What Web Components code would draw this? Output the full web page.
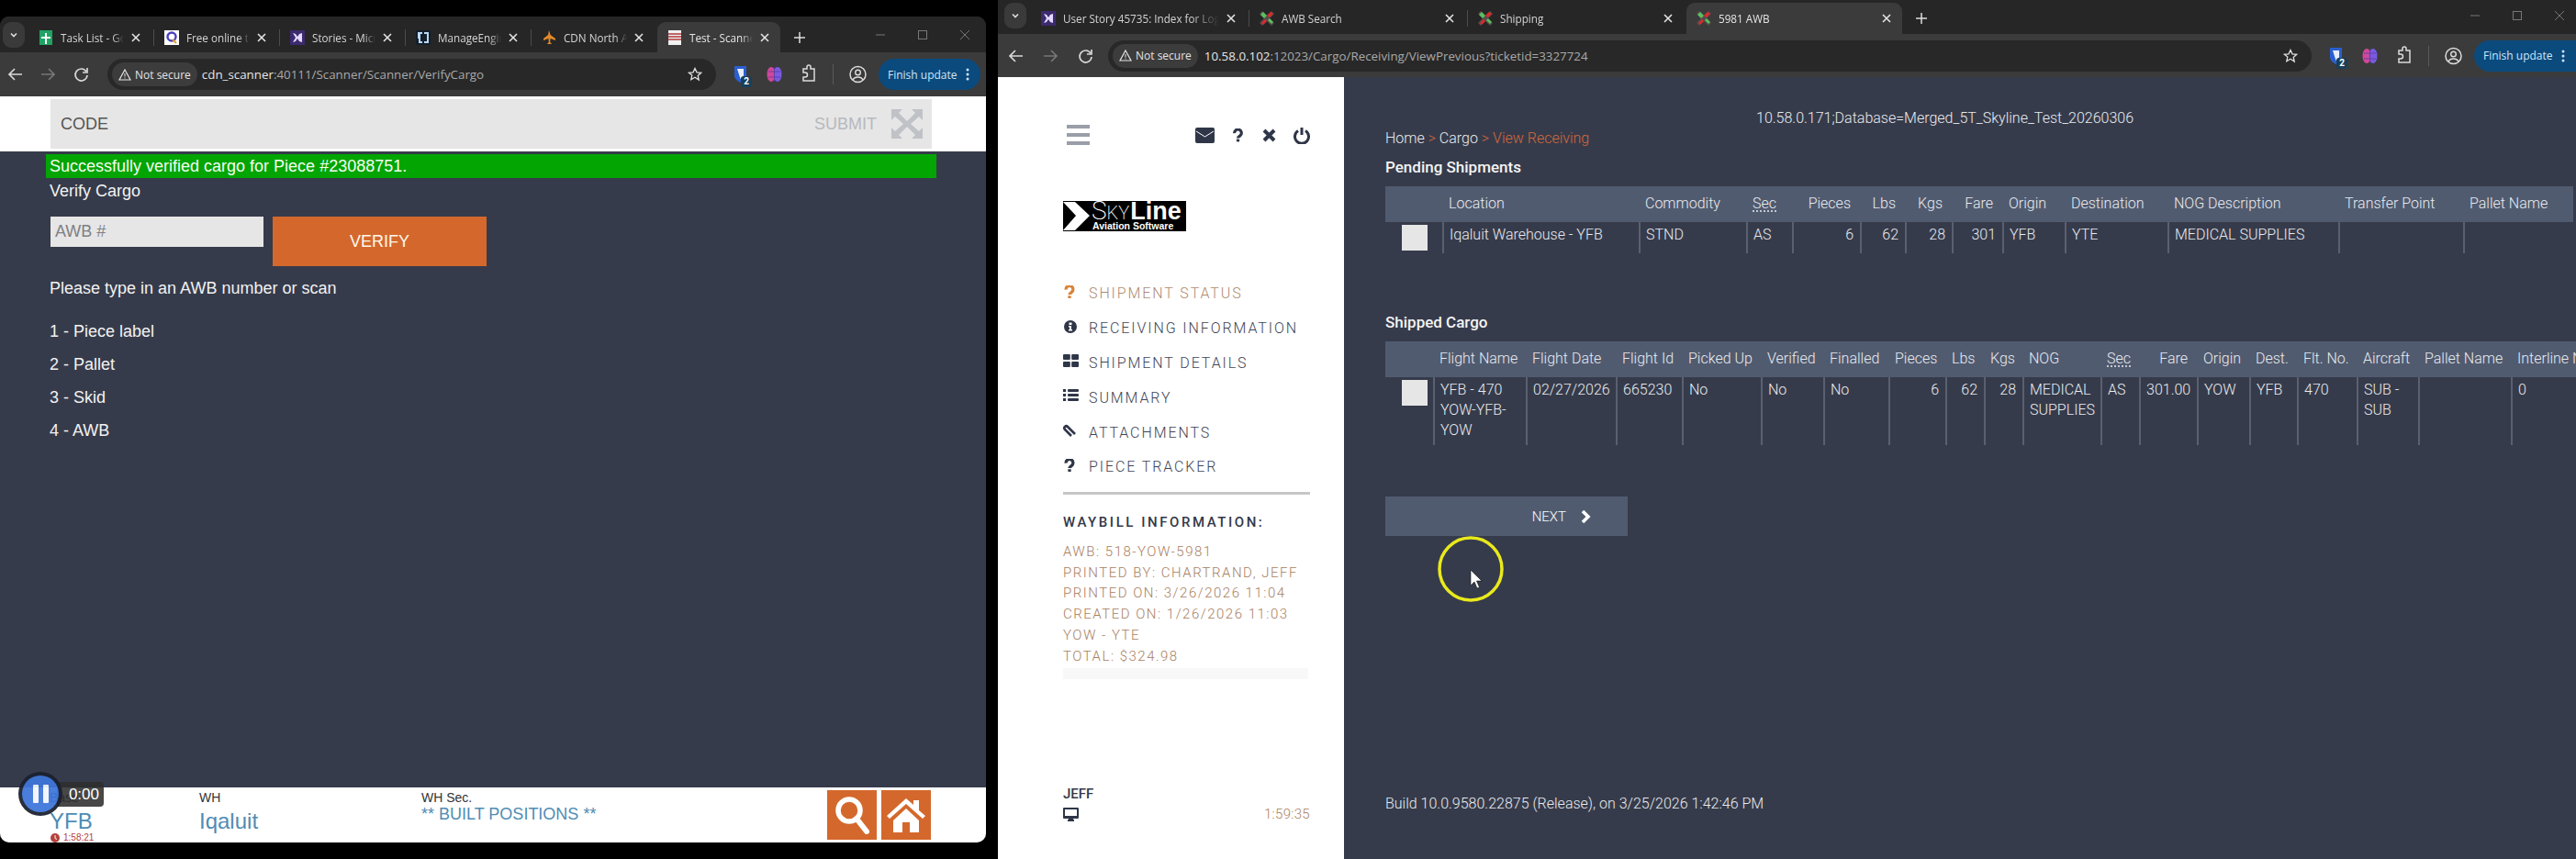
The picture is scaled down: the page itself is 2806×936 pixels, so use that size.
<!DOCTYPE html>
<html>
<head>
<meta charset="utf-8">
<title>Cargo</title>
<style>
  html, body { margin: 0; background: #000; }
  body { width: 2806px; height: 936px; overflow: hidden; }
</style>
</head>
<body>
<desk-top>
  <browser-window class="left" url-host="cdn_scanner" url-rest=":40111/Scanner/Scanner/VerifyCargo">
    <browser-tab slot="tabs" icon="sheets" label="Task List - Google Sheets"></browser-tab>
    <browser-tab slot="tabs" icon="free" label="Free online tools"></browser-tab>
    <browser-tab slot="tabs" icon="vs" label="Stories - Microsoft"></browser-tab>
    <browser-tab slot="tabs" icon="me" label="ManageEngine"></browser-tab>
    <browser-tab slot="tabs" icon="plane" label="CDN North Air" nosep></browser-tab>
    <browser-tab slot="tabs" icon="note" label="Test - Scanner" active nosep></browser-tab>
    <scanner-page></scanner-page>
  </browser-window>
  <browser-window class="right" url-host="10.58.0.102" url-rest=":12023/Cargo/Receiving/ViewPrevious?ticketid=3327724">
    <browser-tab slot="tabs" icon="vs" label="User Story 45735: Index for Logging"></browser-tab>
    <browser-tab slot="tabs" icon="sky" label="AWB Search"></browser-tab>
    <browser-tab slot="tabs" icon="sky" label="Shipping" nosep></browser-tab>
    <browser-tab slot="tabs" icon="sky" label="5981 AWB" active nosep></browser-tab>
    <skyline-page></skyline-page>
  </browser-window>
</desk-top>

<script>
const FAVICONS = {
  sheets: '<path d="M1 0h14v16H1z" fill="#1fa463"/><path d="M7 3h2v4h4v2H9v6H7V9H3V7h4z" fill="#fff"/>',
  free: '<rect width="16" height="16" fill="#fff"/><circle cx="8" cy="7" r="4.500" fill="none" stroke="#4a3fc0" stroke-width="2.400"/><path d="M9 10l4 4" stroke="#e0a020" stroke-width="2"/>',
  vs: '<rect width="16" height="16" fill="#3c2a6e"/><path d="M3 3l3 5-3 5 3-1 2-3 2 3 3 1V3l-3 1-2 3-2-3z" fill="#e3d8ff"/>',
  me: '<rect width="16" height="16" fill="#14202c"/><path d="M2 2h5v2H5v8h2v2H3V9H2zM9 2h5v12H9v-2h3V4H9z" fill="#bcd8f4"/>',
  plane: '<path d="M8 0l1.600 5L15 9v2l-5.400-2-.4 4 2 2H5.800l2-2-.4-4L2 11V9l5-4z" fill="#e08a2a"/>',
  note: '<rect x="1" width="14" height="16" fill="#f1f1f1"/><path d="M1 4h14M1 7h14M1 10h14" stroke="#b03a3a" stroke-width="1.600"/>',
  sky: '<path d="M0 3l5 5-5 5 3 3 5-5 5 5 3-3-5-5 5-5-3-3-5 5-5-5z" fill="#5a4a4a"/><path d="M8 5l4-4 3 2-4 4zM2 13l4-4 2 2-4 4z" fill="#d92b2b"/><path d="M1 4l3-3 4 4-3 3zM9 10l2-2 4 4-2 2z" fill="#58c060"/>'
};

// desktop behind the two browser windows
class DeskTop extends HTMLElement {
  constructor() {
    super();
    this.attachShadow({ mode: 'open' }).innerHTML = `
      <style>
        :host { display: grid; grid-template-columns: 1074px 1719px; column-gap: 13px; height: 936px; background: #000; }
        ::slotted(.left) { margin: 18px 0; height: 900px; border-radius: 10px; --strip-top: 6px; --strip-h: 39px; --bar-h: 48px; --tabs-left: 31px; --chev-left: 3px; --tab-w: 137px; --nav-pad: 0px; --nav-gap: 0px; --omni-left: 9px; --url-left: 5px; --pill-right: 6px; --ctl-shift: 0px; }
        ::slotted(.right) { height: 936px; --strip-top: 3px; --strip-h: 37px; --bar-h: 47px; --tabs-left: 36px; --chev-left: 7px; --tab-w: 238px; --nav-pad: 3px; --nav-gap: 2px; --omni-left: 5px; --url-left: 7px; --pill-right: 0px; --ctl-shift: -5px; }
      </style>
      <slot></slot>`;
  }
}

class BrowserTab extends HTMLElement {
  constructor() {
    super();
    const active = this.hasAttribute('active');
    const sep = this.hasAttribute('nosep') ? '' : 'sep';
    this.attachShadow({ mode: 'open' }).innerHTML = `
      <style>
        :host { display: block; width: var(--tab-w); height: 34px; flex: none; }
        .tab { position: relative; display: flex; align-items: center; box-sizing: border-box; height: 34px; padding-left: 11px; color: #d4d4d4; border-radius: 9px 9px 0 0; margin-right: 3px; }
        .tab.on { background: #3b3b3b; color: #e6e6e6; }
        .tab.sep::after { content: ""; position: absolute; right: -3px; top: 8px; width: 1px; height: 18px; background: #4c4c4c; }
        svg.fav { width: 16px; height: 16px; flex: none; margin-right: 8px; }
        .label { flex: 1; min-width: 0; white-space: nowrap; overflow: hidden; font: 11.7px "Open Sans", sans-serif; -webkit-mask-image: linear-gradient(to right, #000 82%, transparent); mask-image: linear-gradient(to right, #000 82%, transparent); }
        .x { flex: none; width: 10px; height: 10px; margin: 0 12px 0 8px; }
      </style>
      <div class="tab ${active ? 'on' : ''} ${sep}">
        <svg class="fav" viewBox="0 0 16 16">${FAVICONS[this.getAttribute('icon')]}</svg>
        <span class="label">${this.getAttribute('label')}</span>
        <svg class="x" viewBox="0 0 10 10"><path d="M1 1l8 8M9 1l-8 8" stroke="#e4e4e4" stroke-width="1.600"/></svg>
      </div>`;
  }
}

class BrowserWindow extends HTMLElement {
  constructor() {
    super();
    this.attachShadow({ mode: 'open' }).innerHTML = `
      <style>
        :host { display: flex; flex-direction: column; position: relative; overflow: hidden; background: #363b4b; }
        .strip { display: flex; align-items: flex-start; box-sizing: border-box; height: var(--strip-h); padding-top: var(--strip-top); background: #262626; flex: none; }
        .chev { flex: none; width: 24px; height: 28px; margin-left: var(--chev-left); margin-right: calc(var(--tabs-left) - var(--chev-left) - 24px); background: #3a3a3a; border-radius: 9px; display: flex; align-items: center; justify-content: center; }
        .tabs { display: flex; }
        .plus { flex: none; width: 12px; height: 12px; margin: 11px 0 0 12px; }
        .ctl { margin-left: auto; margin-right: var(--ctl-shift); display: flex; }
        .ctl svg { width: 46px; height: 34px; }
        .bar { display: flex; align-items: center; height: var(--bar-h); flex: none; box-sizing: border-box; padding: 0 var(--pill-right) 0 var(--nav-pad); background: #3b3b3b; }
        .nav { display: flex; gap: var(--nav-gap); flex: none; }
        .nav svg { height: 18px; display: block; }
        .omni { flex: 1; min-width: 0; height: 34px; margin-left: var(--omni-left); border-radius: 17px; background: #282828; display: flex; align-items: center; padding: 0 15px 0 5px; }
        .chip { display: flex; align-items: center; gap: 4px; height: 26px; padding: 0 7px 0 7px; border-radius: 13px; background: #3c3c3c; color: #e4e4e4; font: 12px "Open Sans", sans-serif; white-space: nowrap; }
        .url { margin-left: var(--url-left); flex: 1; font: 13.35px "Open Sans", sans-serif; color: #e6e6e6; white-space: nowrap; }
        .url span { color: #a9a9a9; }
        .tools { display: flex; align-items: center; flex: none; margin-left: 8px; }
        .ext { position: relative; display: block; width: 37px; height: 22px; }
        .ext svg { display: block; width: 37px; height: 22px; }
        .badge { position: absolute; right: 6px; bottom: -3px; width: 12px; height: 12px; background: #17405c; color: #fff; font: bold 10px/12px Roboto, sans-serif; text-align: center; border-radius: 3px; }
        .sep { width: 1px; height: 22px; background: #5a5a5a; margin: 0 8px 0 8px; }
        .pill { display: flex; align-items: center; width: 111px; height: 34px; box-sizing: border-box; margin-left: 4px; padding-left: 10px; border-radius: 17px 0 0 17px; background: #0b4a7d; color: #cfe6fa; font: 12px "Open Sans", sans-serif; white-space: nowrap; }
        :host(.left) .pill { border-radius: 17px; }
        .pill svg { width: 4px; height: 14px; margin-left: 9px; }
        .page { flex: 1; min-height: 0; display: flex; flex-direction: column; }
      </style>
      <div class="strip">
        <span class="chev"><svg width="10" height="10" viewBox="0 0 10 10"><path d="M2 3.500l3 3 3-3" fill="none" stroke="#ddd" stroke-width="1.600"/></svg></span>
        <div class="tabs"><slot name="tabs"></slot></div>
        <svg class="plus" viewBox="0 0 12 12"><path d="M6 0v12M0 6h12" stroke="#ddd" stroke-width="1.500"/></svg>
        <div class="ctl">
          <svg viewBox="0 0 46 34"><path d="M18 14h10" stroke="#777" stroke-width="1"/></svg>
          <svg viewBox="0 0 46 34"><rect x="18.500" y="9.500" width="9" height="9" fill="none" stroke="#777"/></svg>
          <svg viewBox="0 0 46 34"><path d="M18 9l10 10M28 9l-10 10" stroke="#777"/></svg>
        </div>
      </div>
      <div class="bar">
        <div class="nav">
          <svg width="34" viewBox="0 0 34 18"><path d="M24 9H10M16 3L10 9l6 6" fill="none" stroke="#d8d8d8" stroke-width="1.700"/></svg>
          <svg width="36" viewBox="0 0 36 18"><path d="M11 9h14M19 3l6 6-6 6" fill="none" stroke="#777" stroke-width="1.700"/></svg>
          <svg width="38" viewBox="0 0 38 18"><path d="M24 6a6.500 6.500 0 1 0 1 4" fill="none" stroke="#d8d8d8" stroke-width="1.700"/><path d="M25 2v5h-5" fill="none" stroke="#d8d8d8" stroke-width="1.700"/></svg>
        </div>
        <div class="omni">
          <span class="chip"><svg width="14" height="13" viewBox="0 0 14 13"><path d="M7 1l6 11H1z" fill="none" stroke="#e4e4e4" stroke-width="1.200"/><path d="M7 5v3.500M7 9.500v1" stroke="#e4e4e4"/></svg>Not secure</span>
          <span class="url">${this.getAttribute('url-host')}<span>${this.getAttribute('url-rest')}</span></span>
          <svg width="16" height="16" viewBox="0 0 16 16"><path d="M8 1.500l2 4.300 4.700.5-3.500 3.100 1 4.600L8 11.300l-4.200 2.400 1-4.600L1.300 6.300 6 5.800z" fill="none" stroke="#e0e0e0" stroke-width="1.300"/></svg>
        </div>
        <div class="tools">
          <span class="ext"><svg viewBox="0 0 37 22"><path d="M12 2h13v10c0 4-3 6-6.500 8C15 18 12 16 12 12z" fill="#2a5fd0"/><path d="M15 5h7v7c0 2-2 3-3.500 4z" fill="#e8eefc"/></svg><span class="badge">2</span></span>
          <span class="ext"><svg viewBox="0 0 37 22"><ellipse cx="15" cy="11" rx="4.500" ry="8" fill="#d0489a"/><ellipse cx="22" cy="11" rx="4.500" ry="8" fill="#7a5ae0"/><path d="M18.500 3v16M12 8h13M12 14h13" stroke="#5e3a9c" stroke-width=".8"/></svg></span>
          <span class="ext"><svg viewBox="0 0 37 22"><path d="M13 5h4V3a2 2 0 0 1 4 0v2h4v13H13v-4h2a2 2 0 0 0 0-5h-2z" fill="none" stroke="#dcdcdc" stroke-width="1.500"/></svg></span>
          <span class="sep"></span>
          <span class="ext"><svg viewBox="0 0 37 22"><circle cx="18.500" cy="11" r="8.500" fill="none" stroke="#dcdcdc" stroke-width="1.500"/><circle cx="18.500" cy="9" r="2.800" fill="none" stroke="#dcdcdc" stroke-width="1.400"/><path d="M13 17c2-4 9-4 11 0" fill="none" stroke="#dcdcdc" stroke-width="1.400"/></svg></span>
          <span class="pill">Finish update<svg viewBox="0 0 4 14"><circle cx="2" cy="2" r="1.500" fill="#cfe6fa"/><circle cx="2" cy="7" r="1.500" fill="#cfe6fa"/><circle cx="2" cy="12" r="1.500" fill="#cfe6fa"/></svg></span>
        </div>
      </div>
      <div class="page"><slot></slot></div>`;
  }
}

class ScannerPage extends HTMLElement {
  constructor() {
    super();
    this.attachShadow({ mode: 'open' }).innerHTML = `
      <style>
        :host { display: flex; flex-direction: column; flex: 1; position: relative; min-height: 0; background: #363b4b; color: #f2f2f2; font: 18px/20px "Liberation Sans", Arial, sans-serif; }
        .top { background: #fff; padding: 3px 59px 3px 55px; flex: none; }
        .code { display: flex; align-items: center; height: 54px; box-sizing: border-box; padding: 0 10px 0 11px; background: #e6e6e6; color: #555; }
        .submit { margin-left: auto; color: #b6b9be; margin-right: 16px; }
        .ok { height: 26px; line-height: 26px; margin: 3px 54px 0 50px; padding-left: 4px; background: #03a503; color: #f4fff4; }
        .title { margin: 4px 0 0 54px; }
        .form { display: flex; align-items: flex-start; gap: 10px; margin: 18px 0 0 55px; }
        .awb { width: 232px; height: 33px; box-sizing: border-box; padding: 0 5px; line-height: 33px; background: #e6e6e6; color: #7f8084; }
        .verify { width: 233px; height: 54px; line-height: 54px; text-align: center; background: #d4682c; color: #fff8ee; }
        .help { margin: 14px 0 0 54px; }
        ol { list-style: none; margin: 27px 0 0 54px; padding: 0; }
        li { margin-bottom: 16px; }
        .foot { display: flex; margin-top: auto; height: 60px; box-sizing: border-box; padding: 3px 60px 0 54px; background: #fff; flex: none; color: #4f8cb4; overflow: hidden; }
        .col { flex: none; }
        .base { width: 163px; }
        .wh { width: 242px; }
        .label { font-size: 14px; line-height: 16px; color: #333; }
        .big { font-size: 24px; line-height: 28px; margin-top: 4px; }
        .pos { font-size: 18px; line-height: 20px; }
        .clock { display: flex; align-items: center; gap: 4px; margin: -1px 0 0 1px; font-size: 10px; line-height: 10px; color: #b5423c; }
        .btns { margin-left: auto; display: flex; gap: 5px; }
        .btn { width: 54px; height: 54px; background: #d4682c; display: flex; align-items: center; justify-content: center; }
        .rec { position: absolute; left: 20px; bottom: 29px; width: 48px; height: 48px; border-radius: 50%; background: #1c2130; display: flex; align-items: center; justify-content: center; opacity: .94; }
        .rec i { display: flex; gap: 5px; justify-content: center; align-items: center; width: 40px; height: 40px; border-radius: 50%; background: #3e76da; }
        .rec b { width: 6px; height: 20px; background: #f2f5fb; border-radius: 1px; }
        .timer { position: absolute; left: 62px; bottom: 39px; width: 51px; height: 27px; line-height: 27px; border-radius: 0 4px 4px 0; background: rgba(45, 45, 45, .88); color: #fff; font-size: 17px; text-align: right; box-sizing: border-box; }
        .timer span { margin-right: 5px; }
      </style>
      <div class="top">
        <div class="code">CODE<span class="submit">SUBMIT</span>
          <svg width="34" height="32" viewBox="0 0 34 32" fill="#bfc2c6"><path d="M0 0h12L8 4l9 9 9-9-4-4h12v12l-4-4-9 8 9 8 4-4v12H22l4-4-9-9-9 9 4 4H0V20l4 4 9-8-9-8-4 4z"/></svg>
        </div>
      </div>
      <div class="ok">Successfully verified cargo for Piece #23088751.</div>
      <div class="title">Verify Cargo</div>
      <div class="form">
        <div class="awb">AWB #</div>
        <div class="verify">VERIFY</div>
      </div>
      <div class="help">Please type in an AWB number or scan</div>
      <ol>
        <li>1 - Piece label</li>
        <li>2 - Pallet</li>
        <li>3 - Skid</li>
        <li>4 - AWB</li>
      </ol>
      <div class="foot">
        <div class="col base">
          <div class="label">Base</div>
          <div class="big">YFB</div>
          <div class="clock"><svg width="10" height="10" viewBox="0 0 10 10"><circle cx="5" cy="5" r="5" fill="#b5423c"/><path d="M5 2v3.500l2 1" fill="none" stroke="#fff"/></svg>1:58:21</div>
        </div>
        <div class="col wh">
          <div class="label">WH</div>
          <div class="big">Iqaluit</div>
        </div>
        <div class="col">
          <div class="label">WH Sec.</div>
          <div class="pos">** BUILT POSITIONS **</div>
        </div>
        <div class="btns">
          <div class="btn"><svg width="38" height="42" viewBox="0 0 38 42"><circle cx="16" cy="16" r="12" fill="none" stroke="#fff" stroke-width="5.500"/><path d="M24 25l11 14" stroke="#fff" stroke-width="6" stroke-linecap="round"/></svg></div>
          <div class="btn"><svg width="44" height="40" viewBox="0 0 44 40" fill="#fff"><path d="M22 2L1 21l3 3L22 8l18 16 3-3-7-6V4h-6v5z"/><path d="M8 26L22 13l14 13v13H26V28h-8v11H8z"/></svg></div>
        </div>
      </div>
      <div class="timer"><span>0:00</span></div>
      <div class="rec"><i><b></b><b></b></i></div>`;
  }
}

class NavItem extends HTMLElement {
  constructor() {
    super();
    this.attachShadow({ mode: 'open' }).innerHTML = `
      <style>
        :host { display: flex; align-items: center; height: 37.8px; font: 300 16px "Roboto", sans-serif; letter-spacing: 1.9px; color: #3f4554; white-space: nowrap; --ic: #2f3648; }
        :host([active]) { color: #b08a6e; --ic: #d9843a; }
        .ic { width: 28px; flex: none; margin-top: -4px; display: flex; }
        ::slotted(svg) { fill: var(--ic); }
      </style>
      <span class="ic"><slot name="icon"></slot></span><slot></slot>`;
  }
}

const PENDING = {
  widths: [62, 214, 117, 50, 74, 49, 51, 55, 68, 112, 186, 136, 120],
  right: [4, 5, 6, 7],
  abbr: [3],
  head: ['', 'Location', 'Commodity', 'Sec', 'Pieces', 'Lbs', 'Kgs', 'Fare', 'Origin', 'Destination', 'NOG Description', 'Transfer Point', 'Pallet Name'],
  row: ['', 'Iqaluit Warehouse - YFB', 'STND', 'AS', '6', '62', '28', '301', 'YFB', 'YTE', 'MEDICAL SUPPLIES', '', '']
};
const SHIPPED = {
  widths: [52, 101, 98, 72, 86, 68, 71, 62, 42, 42, 85, 42, 63, 57, 52, 65, 67, 101, 100],
  right: [7, 8, 9, 12],
  abbr: [11],
  head: ['', 'Flight Name', 'Flight Date', 'Flight Id', 'Picked Up', 'Verified', 'Finalled', 'Pieces', 'Lbs', 'Kgs', 'NOG', 'Sec', 'Fare', 'Origin', 'Dest.', 'Flt. No.', 'Aircraft', 'Pallet Name', 'Interline No.'],
  row: ['', 'YFB - 470<br>YOW-YFB-<br>YOW', '02/27/2026', '665230', 'No', 'No', 'No', '6', '62', '28', 'MEDICAL<br>SUPPLIES', 'AS', '301.00', 'YOW', 'YFB', '470', 'SUB -<br>SUB', '', '0']
};

class DataTable extends HTMLElement {
  constructor() {
    super();
    const d = this.getAttribute('name') === 'pending' ? PENDING : SHIPPED;
    const total = d.widths.reduce((a, b) => a + b, 0);
    const cls = (i) => d.right.includes(i) ? ' class="r"' : '';
    this.attachShadow({ mode: 'open' }).innerHTML = `
      <style>
        :host { display: block; }
        table { table-layout: fixed; border-collapse: separate; border-spacing: 0; width: ${total}px; font: 300 16px/22px "Roboto", sans-serif; color: #e9ebef; }
        thead tr { background: #515b70; }
        th { height: 39px; box-sizing: border-box; padding: 0 3px 1px 7px; font-weight: 300; text-align: left; white-space: nowrap; overflow: hidden; }
        th.r { text-align: right; padding-right: 10px; }
        td { vertical-align: top; padding: 3px 4px 5px 6px; border-left: 2px solid #596070; white-space: nowrap; }
        td.r { text-align: right; padding-right: 7px; }
        td.box { border-left: 0; padding: 3px 0 3px 18px; }
        .check { width: 28px; height: 28px; background: #e6e6e6; }
        u { text-decoration: underline dotted; text-underline-offset: 3px; }
      </style>
      <table>
        <colgroup>${d.widths.map(w => `<col style="width:${w}px">`).join('')}</colgroup>
        <thead><tr>${d.head.map((h, i) => `<th${cls(i)}>${d.abbr.includes(i) ? `<u>${h}</u>` : h}</th>`).join('')}</tr></thead>
        <tbody><tr>${d.row.map((c, i) => i === 0 ? '<td class="box"><div class="check"></div></td>' : `<td${cls(i)}>${c}</td>`).join('')}</tr></tbody>
      </table>`;
  }
}

class SkylineLogo extends HTMLElement {
  constructor() {
    super();
    this.attachShadow({ mode: 'open' }).innerHTML = `
      <style>
        :host { display: flex; width: 134px; height: 33px; background: #000; color: #fff; overflow: hidden; font-family: "Liberation Sans", Arial, sans-serif; }
        svg { flex: none; width: 29px; height: 33px; }
        .t { margin-left: 2px; display: flex; flex-direction: column; }
        .name { display: flex; align-items: baseline; height: 22px; line-height: 22px; white-space: nowrap; }
        .sky { font: 200 28px/22px Roboto, sans-serif; }
        .ky { font: 200 20px/22px Roboto, sans-serif; }
        .line { font-size: 27px; font-weight: 700; margin-left: 1px; }
        .sub { font-size: 10.5px; font-weight: 700; line-height: 11px; white-space: nowrap; margin-left: 1px; }
      </style>
      <svg viewBox="0 0 29 33"><path d="M0 1h13l16 15L13 32H0l14-16z" fill="#fff"/></svg>
      <div class="t">
        <div class="name"><span class="sky">S</span><span class="ky">KY</span><span class="line">Line</span></div>
        <div class="sub">Aviation Software</div>
      </div>`;
  }
}

class SideBar extends HTMLElement {
  constructor() {
    super();
    const q = '<path d="M3.500 6a5 5 0 1 1 8 3.500C9.500 11 8.500 11.500 8.500 13" fill="none" stroke-width="4.200"/><rect x="6.400" y="14.400" width="4.200" height="3.600" stroke="none"/>';
    this.attachShadow({ mode: 'open' }).innerHTML = `
      <style>
        :host { display: flex; flex-direction: column; flex: none; width: 377px; box-sizing: border-box; padding: 52px 37px 38px 71px; background: #fff; }
        .icons { display: flex; align-items: center; height: 22px; }
        .burger { width: 25px; height: 22px; margin: 0 0 0 4px; background: linear-gradient(#9a9ea8 0 4px, transparent 4px 9px, #9a9ea8 9px 13px, transparent 13px 18px, #9a9ea8 18px 22px); }
        .acts { margin-left: auto; display: flex; align-items: center; }
        skyline-logo { margin-top: 61px; }
        nav { margin-top: 49px; }
        hr { border: 0; height: 3px; background: #c6c6c6; margin: 8px 0 0; }
        h3 { margin: 19px 0 0; font: 500 15px/22px "Roboto", sans-serif; letter-spacing: 2.55px; color: #333947; white-space: nowrap; }
        .info { margin-top: 10px; font: 300 15px/22.8px "Roboto", sans-serif; letter-spacing: 1.5px; color: #a8805f; white-space: nowrap; }
        .band { height: 12px; margin-top: 1px; width: 267px; background: #f8f8f8; }
        .foot { margin-top: auto; }
        .who { font: 500 15px/22px "Roboto", sans-serif; color: #333947; }
        .row { display: flex; align-items: center; justify-content: space-between; height: 22px; }
        .time { font: 300 15px "Roboto", sans-serif; color: #a8805f; letter-spacing: .3px; }
      </style>
      <div class="icons">
        <span class="burger"></span>
        <span class="acts">
          <svg width="21" height="17" viewBox="0 0 21 17"><rect width="21" height="17" rx="2" fill="#2f3648"/><path d="M1 4l9.500 6L20 4" fill="none" stroke="#fff"/></svg>
          <svg style="margin-left:19px" width="13" height="15" viewBox="0 0 17 18" fill="#2f3648" stroke="#2f3648">${q}</svg>
          <svg style="margin-left:20px" width="15" height="15" viewBox="0 0 15 15"><path d="M2 2l11 11M13 2L2 13" stroke="#2f3648" stroke-width="4"/></svg>
          <svg style="margin-left:19px" width="18" height="19" viewBox="0 0 18 19"><path d="M5 4.500a7.500 7.500 0 1 0 8 0" fill="none" stroke="#2f3648" stroke-width="3"/><path d="M9 1v8" stroke="#2f3648" stroke-width="3"/></svg>
        </span>
      </div>
      <skyline-logo></skyline-logo>
      <nav>
        <nav-item active><svg slot="icon" width="14" height="14" viewBox="0 0 17 18" stroke="#d9843a">${q}</svg>SHIPMENT STATUS</nav-item>
        <nav-item><svg slot="icon" width="16" height="16" viewBox="0 0 16 16"><path fill-rule="evenodd" d="M8 1a7 7 0 1 1 0 14A7 7 0 0 1 8 1zM6.500 3.500v2.500h3V3.500zM6 7v1.500h1v2.500H6v1.500h4V11H9V7z"/></svg>RECEIVING INFORMATION</nav-item>
        <nav-item><svg slot="icon" width="17" height="14" viewBox="0 0 17 14"><rect width="7.800" height="6" rx="1"/><rect x="9.200" width="7.800" height="6" rx="1"/><rect y="8" width="7.800" height="6" rx="1"/><rect x="9.200" y="8" width="7.800" height="6" rx="1"/></svg>SHIPMENT DETAILS</nav-item>
        <nav-item><svg slot="icon" width="17" height="16" viewBox="0 0 17 16"><rect y="1" width="3" height="3"/><rect y="6" width="3" height="3"/><rect y="11" width="3" height="3"/><rect x="5" y="1" width="12" height="3" rx="1"/><rect x="5" y="6" width="12" height="3" rx="1"/><rect x="5" y="11" width="12" height="3" rx="1"/></svg>SUMMARY</nav-item>
        <nav-item><svg slot="icon" width="15" height="15" viewBox="0 0 15 15" style="fill:none"><path d="M13 11L5 3a2 2 0 0 0-3 3l7 7" stroke="#2f3648" stroke-width="2.600" fill="none"/></svg>ATTACHMENTS</nav-item>
        <nav-item><svg slot="icon" width="14" height="14" viewBox="0 0 17 18" stroke="#2f3648">${q}</svg>PIECE TRACKER</nav-item>
      </nav>
      <hr>
      <h3>WAYBILL INFORMATION:</h3>
      <div class="info">
        <div>AWB: 518-YOW-5981</div>
        <div>PRINTED BY: CHARTRAND, JEFF</div>
        <div>PRINTED ON: 3/26/2026 11:04</div>
        <div>CREATED ON: 1/26/2026 11:03</div>
        <div>YOW - YTE</div>
        <div>TOTAL: $324.98</div>
      </div>
      <div class="band"></div>
      <div class="foot">
        <div class="who">JEFF</div>
        <div class="row">
          <svg width="17" height="15" viewBox="0 0 17 15"><path d="M1 0h15a1 1 0 0 1 1 1v10a1 1 0 0 1-1 1h-5v1h1v2H5v-2h1v-1H1a1 1 0 0 1-1-1V1a1 1 0 0 1 1-1zm1 2v7h13V2z" fill="#2f3648"/></svg>
          <span class="time">1:59:35</span>
        </div>
      </div>`;
  }
}

class SkylinePage extends HTMLElement {
  constructor() {
    super();
    this.attachShadow({ mode: 'open' }).innerHTML = `
      <style>
        :host { display: flex; flex: 1; min-height: 0; position: relative; overflow: hidden; background: #363b4b; }
        main { flex: 1; min-width: 0; display: flex; flex-direction: column; box-sizing: border-box; padding: 34px 0 49px 45px; color: #e9ebef; font: 300 16px/22px "Roboto", sans-serif; }
        .server { margin-left: 404px; white-space: nowrap; }
        .crumb span { color: #d2693a; }
        h2 { margin: 9px 0 10px; font: 500 17px/22px "Roboto", sans-serif; color: #f4f4f4; }
        h2.second { margin-top: 64px; }
        .next { display: flex; align-items: center; justify-content: flex-end; gap: 15px; margin-top: 56px; width: 264px; height: 43px; box-sizing: border-box; padding-right: 40px; background: #515b70; color: #fff; font-size: 15px; }
        .build { margin-top: auto; }
        .ring { position: absolute; left: 478px; top: 499px; }
      </style>
      <side-bar></side-bar>
      <main>
        <div class="server">10.58.0.171;Database=Merged_5T_Skyline_Test_20260306</div>
        <div class="crumb">Home <span>&gt;</span> Cargo <span>&gt; View Receiving</span></div>
        <h2>Pending Shipments</h2>
        <data-table name="pending"></data-table>
        <h2 class="second">Shipped Cargo</h2>
        <data-table name="shipped"></data-table>
        <div class="next">NEXT<svg width="12" height="16" viewBox="0 0 12 16"><path d="M3 2l6 6-6 6" fill="none" stroke="#fff" stroke-width="3.600"/></svg></div>
        <div class="build">Build 10.0.9580.22875 (Release), on 3/25/2026 1:42:46 PM</div>
      </main>
      <svg class="ring" width="74" height="74" viewBox="0 0 74 74">
        <circle cx="37" cy="37" r="34" fill="none" stroke="#e9e91c" stroke-width="3.500"/>
        <path d="M37 38v17l4-4 3 7 2.500-1-3-7h5.500z" fill="#fff" stroke="#111" stroke-width=".6"/>
      </svg>`;
  }
}

customElements.define('browser-tab', BrowserTab);
customElements.define('browser-window', BrowserWindow);
customElements.define('desk-top', DeskTop);
customElements.define('nav-item', NavItem);
customElements.define('data-table', DataTable);
customElements.define('skyline-logo', SkylineLogo);
customElements.define('side-bar', SideBar);
customElements.define('scanner-page', ScannerPage);
customElements.define('skyline-page', SkylinePage);
</script>
</body>
</html>
